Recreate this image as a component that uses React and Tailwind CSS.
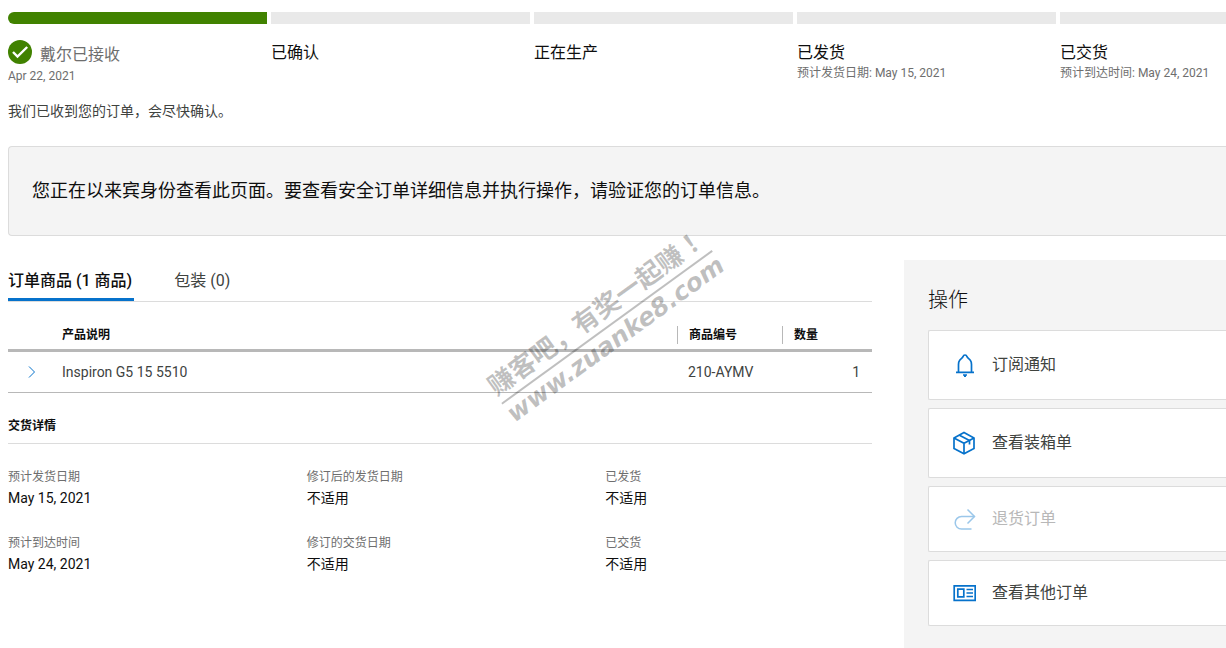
const steps = [
  { title: '戴尔已接收', note: 'Apr 22, 2021', done: true },
  { title: '已确认' },
  { title: '正在生产' },
  { title: '已发货', note: '预计发货日期: May 15, 2021' },
  { title: '已交货', note: '预计到达时间: May 24, 2021' },
];

const details = [
  { label: '预计发货日期', value: 'May 15, 2021' },
  { label: '修订后的发货日期', value: '不适用' },
  { label: '已发货', value: '不适用' },
  { label: '预计到达时间', value: 'May 24, 2021' },
  { label: '修订的交货日期', value: '不适用' },
  { label: '已交货', value: '不适用' },
];

function CheckBadge() {
  return (
    <svg viewBox="0 0 24 24" className="size-6 shrink-0" aria-hidden="true">
      <circle cx="12" cy="12" r="12" fill="#418200" />
      <path d="M5 12l4.500 4.500L19.200 7" fill="none" stroke="#fff" strokeWidth="2.400" />
    </svg>
  );
}

function BellIcon() {
  return (
    <svg viewBox="0 0 24 24" className="size-6" fill="none" stroke="currentColor" strokeWidth="1.700" aria-hidden="true">
      <path d="M4 19.300h18M6.500 19V11.500c0-1.500.3-3 1.200-4.200 1-1.500 2.700-2.200 3.300-3.600C11.300 2.600 12 2 13 2s1.700.6 2 1.700c.6 1.400 2.300 2.100 3.300 3.600.9 1.200 1.200 2.700 1.200 4.200V19" />
      <path d="M11 22h4M12 23.200h2" strokeWidth="1.400" />
    </svg>
  );
}

function BoxIcon() {
  return (
    <svg viewBox="0 0 24 24" className="size-6" fill="none" stroke="currentColor" strokeWidth="1.700" aria-hidden="true">
      <path d="M12 1.500l10 5.400v10.500l-10 5.400-10-5.400V6.900z" />
      <path d="M2 6.900l10 5.400 10-5.400M12 12.300v10.500" />
      <path d="M7.500 4.200l10 5.400v4" />
    </svg>
  );
}

function ReturnIcon() {
  return (
    <svg viewBox="0 0 24 24" className="size-6" fill="none" stroke="currentColor" strokeWidth="1.500" aria-hidden="true">
      <path d="M22.500 9.500H9.500a6.300 6.300 0 0 0 0 12.600H19.500" />
      <path d="M15.500 2.500l7 7-7 7" />
    </svg>
  );
}

function CardIcon() {
  return (
    <svg viewBox="0 0 24 24" className="size-6" fill="none" stroke="currentColor" strokeWidth="1.700" aria-hidden="true">
      <path d="M2.200 4.800h21v14.500h-21zM5.800 8.200h6v7.600h-6zM14.500 8.500h6.500M14.500 12h6.500M14.500 15.500h6.500" />
    </svg>
  );
}

const actions = [
  { label: '订阅通知', Icon: BellIcon, size: 'h-[70px]' },
  { label: '查看装箱单', Icon: BoxIcon, size: 'h-[70px]' },
  { label: '退货订单', Icon: ReturnIcon, size: 'h-[66px]', disabled: true },
  { label: '查看其他订单', Icon: CardIcon, size: 'h-[66px]' },
];

function Progress() {
  return (
    <ol className="grid grid-cols-[repeat(4,259fr)_166fr] gap-x-1">
      {steps.map((s) => (
        <li key={s.title} className="min-w-0">
          <div className={s.done ? 'h-3 rounded-l-full bg-[#418200]' : 'h-3 bg-[#e9e9e9]'} />
          {s.done ? (
            <div className="mt-4 flex h-6 items-center gap-2 text-base text-[#6e6e6e]">
              <CheckBadge />
              <span className="pt-1.5">{s.title}</span>
            </div>
          ) : (
            <div className="mt-[17px] text-base leading-6 text-[#0e0e0e]">{s.title}</div>
          )}
          {s.note && (
            <div className={s.done ? 'mt-1 text-xs leading-4 text-[#6e6e6e]' : 'text-xs leading-4 whitespace-nowrap text-[#6e6e6e]'}>
              {s.note}
            </div>
          )}
        </li>
      ))}
    </ol>
  );
}

function Items() {
  return (
    <section>
      <div role="tablist" className="mt-1 flex h-[38px] gap-10 border-b border-[#dcdcdc] text-base">
        <button role="tab" aria-selected="true" className="h-[37px] border-b-3 border-[#0672cb] pr-0.5 text-left font-medium whitespace-nowrap text-[#0e0e0e]">
          订单商品 (1 商品)
        </button>
        <button role="tab" aria-selected="false" className="h-[37px] border-b-3 border-transparent whitespace-nowrap text-[#40433f]">
          包装 (0)
        </button>
      </div>
      <table className="mt-4 w-full table-fixed border-collapse text-left">
        <colgroup>
          <col className="w-[54px]" />
          <col />
          <col className="w-[105px]" />
          <col className="w-[90px]" />
        </colgroup>
        <thead>
          <tr className="border-b-3 border-[#b8b8b8] text-xs text-[#0e0e0e]">
            <th className="p-0" aria-label="展开" />
            <th className="h-8 p-0 pt-1 font-bold">产品说明</th>
            <th className="p-0 pt-1 font-bold">
              <div className="border-l border-[#b8b8b8] pl-[11px] leading-[18px]">商品编号</div>
            </th>
            <th className="p-0 pt-1 font-bold">
              <div className="border-l border-[#b8b8b8] pl-[11px] leading-[18px]">数量</div>
            </th>
          </tr>
        </thead>
        <tbody>
          <tr className="h-[42px] border-b border-[#b8b8b8] text-sm text-[#40433f]">
            <td className="p-0">
              <button aria-label="展开 Inspiron G5 15 5510" className="ml-4 flex size-4 items-center justify-center text-[#0672cb]">
                <svg viewBox="0 0 16 16" className="size-4" fill="none" stroke="currentColor" aria-hidden="true">
                  <path d="M5 2.500l5.500 5.500L5 13.500" />
                </svg>
              </button>
            </td>
            <td className="p-0">Inspiron G5 15 5510</td>
            <td className="p-0 pl-[11px]">210-AYMV</td>
            <td className="p-0 pr-3 text-right">1</td>
          </tr>
        </tbody>
      </table>
      <h2 className="mt-6 border-b border-[#dcdcdc] pt-px pb-[9px] text-xs leading-4 font-bold text-[#0e0e0e]">交货详情</h2>
      <dl className="mt-[23px] -mr-8 grid grid-cols-3 gap-y-6">
        {details.map((d) => (
          <div key={d.label}>
            <dt className="text-xs leading-5 text-[#6e6e6e]">{d.label}</dt>
            <dd className="text-sm leading-[22px] text-[#0e0e0e]">{d.value}</dd>
          </div>
        ))}
      </dl>
    </section>
  );
}

export default function App() {
  return (
    <div className="relative flex min-h-screen flex-col overflow-hidden bg-white pt-3 pl-2 font-[Roboto,'Noto_Sans_CJK_SC',sans-serif]" lang="zh-CN">
      <Progress />
      <p className="mt-[17px] text-sm leading-5 text-[#40433f]">我们已收到您的订单，会尽快确认。</p>
      <div className="mt-[25px] flex h-[90px] items-center rounded-l border border-r-0 border-[#dcdcdc] bg-[#f4f4f4] pl-[23px] text-lg text-[#0e0e0e]">
        <p>您正在以来宾身份查看此页面。要查看安全订单详细信息并执行操作，请验证您的订单信息。</p>
      </div>
      <main className="mt-6 grid grow grid-cols-[864fr_322fr] gap-8">
        <Items />
        <aside className="bg-[#f4f4f4] pt-6 pl-6">
          <h2 className="text-xl leading-8 font-light text-[#0e0e0e]">操作</h2>
          <div className="mt-[14px] flex flex-col gap-2">
            {actions.map(({ label, Icon, size, disabled }) => (
              <button
                key={label}
                disabled={disabled}
                className={`${size} flex w-full items-center gap-4 rounded-l-xs border border-r-0 border-[#dcdcdc] bg-white pl-[23px] text-left text-base`}
              >
                <span className={disabled ? 'text-[#9bc7ea]' : 'text-[#0672cb]'}>
                  <Icon />
                </span>
                <span className={disabled ? 'text-[#b8b8b8]' : 'text-[#40433f]'}>{label}</span>
              </button>
            ))}
          </div>
        </aside>
      </main>
      <div className="pointer-events-none absolute top-[232px] left-[480px] flex h-[184px] w-[250px] items-center justify-center" aria-hidden="true">
        <div className="flex shrink-0 -rotate-36 flex-col items-center whitespace-nowrap text-black/25">
          <div className="border-b-2 border-current pb-px text-[26px] leading-8 font-bold">
            赚客吧，有奖一起赚
            <span lang="zh-TW" className="font-['Noto_Sans_CJK_TC',sans-serif]">！</span>
          </div>
          <div className="font-['DejaVu_Sans',sans-serif] text-[25px] leading-7 font-bold italic">www.zuanke8.com</div>
        </div>
      </div>
    </div>
  );
}
